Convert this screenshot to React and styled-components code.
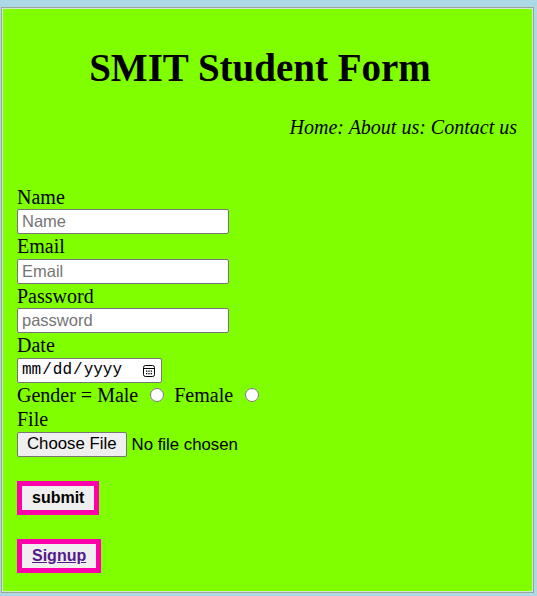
import React from "react";
import styled, { createGlobalStyle } from "styled-components";

const Global = createGlobalStyle`
  html, body { margin: 0; padding: 0; }
  body {
    background: #add8e6;
    font-family: "Liberation Serif", "Times New Roman", serif;
    color: #000;
  }
`;

const Panel = styled.div`
  box-sizing: border-box;
  margin: 7px 3px 0 1px;
  height: 586px;
  background: #7fff00;
  border: 1px solid #9aa69a;
  box-shadow: inset 0 0 0 1px #d4e6cc;
  padding: 1px 16px 0 15px;
`;

const Title = styled.h1`
  margin: 36px 0 0;
  padding-right: 14px;
  text-align: center;
  font-size: 39px;
  font-weight: bold;
  line-height: 45px;
`;

const Nav = styled.p`
  margin: 26px 0 0;
  text-align: right;
  font-style: italic;
  font-size: 20px;
  line-height: 23px;
`;

const Form = styled.form`
  margin-top: 45.5px;
  display: flex;
  flex-direction: column;
  align-items: flex-start;
`;

const Label = styled.label`
  display: block;
  font-size: 20px;
  line-height: 24.5px;
  height: 24.5px;
`;

const TextInput = styled.input`
  box-sizing: border-box;
  width: ${(p) => p.$w || 212}px;
  height: 25px;
  margin: 0;
  padding: 1px 4px;
  border: 1px solid #767676;
  border-radius: 2px;
  background: #fff;
  font-family: "Liberation Sans", Arial, sans-serif;
  font-size: 16.5px;
  color: #000;
  &::placeholder { color: #757575; }
`;

const DateWrap = styled.div`
  position: relative;
  width: 145px;
  height: 25px;
`;

const DateInput = styled(TextInput)`
  font-family: "Liberation Mono", "Courier New", monospace;
  font-size: 16px;
  padding: 1px 3px;
  &::-webkit-calendar-picker-indicator { opacity: 0; }
`;

const CalIcon = styled.svg`
  position: absolute;
  right: 6px;
  top: 6px;
  width: 14px;
  height: 14px;
  pointer-events: none;
`;

const GenderRow = styled.div`
  display: flex;
  align-items: baseline;
  font-size: 20px;
  line-height: 24.5px;
  height: 24.5px;
`;

const Radio = styled.input`
  width: 14px;
  height: 14px;
  margin: 0 10px 0 12px;
  align-self: baseline;
`;

const FileInput = styled.input`
  font-family: "Liberation Sans", Arial, sans-serif;
  font-size: 16.8px;
  height: 25px;
  margin: 0;
  &::file-selector-button {
    font-family: "Liberation Sans", Arial, sans-serif;
    font-size: 16.8px;
    height: 25px;
    padding: 1px 9px;
    margin-right: 5px;
    border: 1px solid #767676;
    border-radius: 2px;
    background: #efefef;
    color: #000;
  }
`;

const PinkButton = styled.button`
  margin-top: 24px;
  border: 5px solid #ff00aa;
  background: #efefef;
  padding: 3px ${(p) => p.$px || 10}px;
  font-family: "Liberation Sans", Arial, sans-serif;
  font-size: 16px;
  font-weight: bold;
  line-height: 18px;
  color: #000;
  border-radius: 0;
`;

const SignLink = styled.a`
  color: #551a8b;
  text-decoration: underline;
`;

export default function App() {
  return (
    <>
      <Global />
      <Panel>
        <Title>SMIT Student Form</Title>
        <Nav>Home: About us: Contact us</Nav>
        <Form onSubmit={(e) => e.preventDefault()}>
          <Label>Name</Label>
          <TextInput type="text" placeholder="Name" />
          <Label>Email</Label>
          <TextInput type="email" placeholder="Email" />
          <Label>Password</Label>
          <TextInput type="password" placeholder="password" />
          <Label>Date</Label>
          <DateWrap>
            <DateInput type="date" $w={145} />
            <CalIcon viewBox="0 0 14 14" fill="none" stroke="#000" strokeWidth="1">
              <rect x="1.5" y="1.5" width="11" height="11" rx="2" />
              <line x1="1.5" y1="4.5" x2="12.5" y2="4.5" />
              <g fill="#000" stroke="none">
                <rect x="4" y="6.5" width="1.3" height="1.3" />
                <rect x="6.35" y="6.5" width="1.3" height="1.3" />
                <rect x="8.7" y="6.5" width="1.3" height="1.3" />
                <rect x="4" y="9" width="1.3" height="1.3" />
                <rect x="6.35" y="9" width="1.3" height="1.3" />
                <rect x="8.7" y="9" width="1.3" height="1.3" />
              </g>
            </CalIcon>
          </DateWrap>
          <GenderRow>
            Gender = Male
            <Radio type="radio" name="g" />
            Female
            <Radio type="radio" name="g" />
          </GenderRow>
          <Label>File</Label>
          <FileInput type="file" />
          <PinkButton type="submit" $px={10}>submit</PinkButton>
          <PinkButton type="button" $px={10}>
            <SignLink href="#">Signup</SignLink>
          </PinkButton>
        </Form>
      </Panel>
    </>
  );
}
